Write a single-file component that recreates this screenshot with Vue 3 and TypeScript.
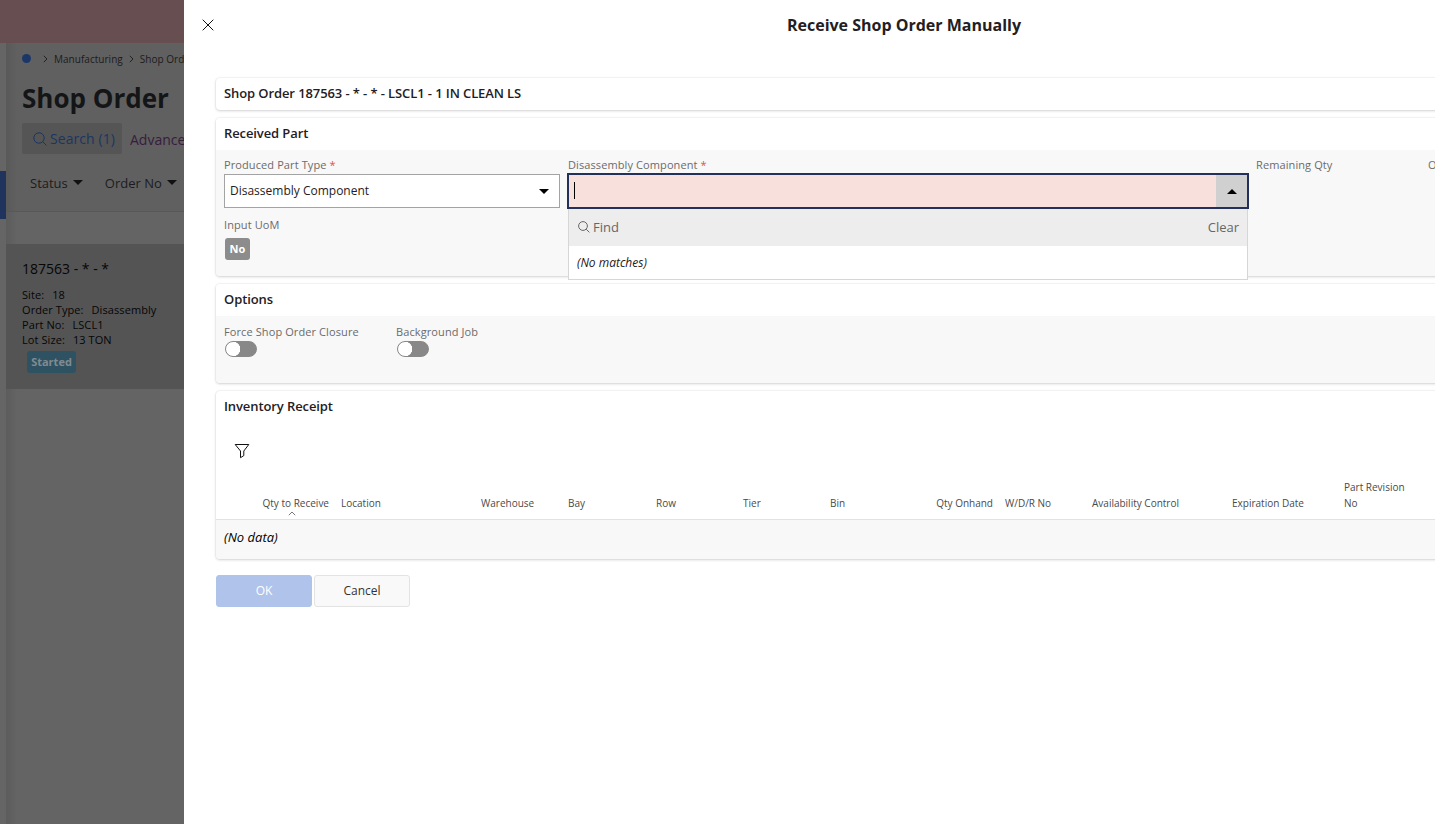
<script setup lang="ts">
interface Column {
  label: string
  width: number
  numeric?: boolean
  sorted?: boolean
}

const columns: Column[] = [
  { label: 'Qty to Receive', width: 119, numeric: true, sorted: true },
  { label: 'Location', width: 140 },
  { label: 'Warehouse', width: 87 },
  { label: 'Bay', width: 88 },
  { label: 'Row', width: 87 },
  { label: 'Tier', width: 87 },
  { label: 'Bin', width: 88 },
  { label: 'Qty Onhand', width: 87, numeric: true },
  { label: 'W/D/R No', width: 87 },
  { label: 'Availability Control', width: 140 },
  { label: 'Expiration Date', width: 112 },
  { label: 'Part Revision No', width: 87 },
]

const details = [
  { name: 'Site', value: '18' },
  { name: 'Order Type', value: 'Disassembly' },
  { name: 'Part No', value: 'LSCL1' },
  { name: 'Lot Size', value: '13 TON' },
]
</script>

<template>
  <div class="app">
    <aside class="page">
      <div class="banner"></div>
      <div class="page-body">
        <div class="rail"><div class="rail-mark"></div></div>
        <div class="content">
          <div class="head">
            <nav class="crumbs">
              <span class="dot"></span>
              <svg class="chev" width="5" height="8" viewBox="0 0 5 8"><path d="M.8 .8 4 4 .8 7.2" /></svg>
              <span class="crumb first">Manufacturing</span>
              <svg class="chev" width="5" height="8" viewBox="0 0 5 8"><path d="M.8 .8 4 4 .8 7.2" /></svg>
              <span class="crumb">Shop Ord</span>
            </nav>
            <h1>Shop Order</h1>
            <div class="tabs">
              <div class="search">
                <svg width="14" height="14" viewBox="0 0 14 14"><circle cx="6" cy="6" r="5.2" /><path d="m9.8 9.8 3.6 3.6" /></svg>
                <span>Search (1)</span>
              </div>
              <span class="advanced">Advance</span>
            </div>
            <div class="filters">
              <span class="status">Status</span><i class="caret"></i>
              <span class="order-no">Order No</span><i class="caret"></i>
            </div>
          </div>
          <div class="strip"></div>
          <div class="record">
            <div class="record-title">187563 - * - *</div>
            <div v-for="d in details" :key="d.name" class="detail">
              <span>{{ d.name }}:</span><span>{{ d.value }}</span>
            </div>
            <span class="started">Started</span>
          </div>
        </div>
      </div>
    </aside>

    <main class="dialog">
      <div class="sheet">
        <header class="bar">
          <svg class="close" width="12" height="12" viewBox="0 0 12 12"><path d="M.7 .7 11.3 11.3M11.3 .7 .7 11.3" /></svg>
          <h2>Receive Shop Order Manually</h2>
        </header>

        <section class="card">
          <h3 class="wide">Shop Order 187563 - * - * - LSCL1 - 1 IN CLEAN LS</h3>
        </section>

        <section class="card received">
          <h3>Received Part</h3>
          <div class="fields">
            <div class="field">
              <label>Produced Part Type <b>*</b></label>
              <div class="select"><span>Disassembly Component</span><i class="caret"></i></div>
            </div>
            <div class="field">
              <label>Disassembly Component <b>*</b></label>
              <div class="combo">
                <div class="entry"><span class="cursor"></span></div>
                <div class="toggle"><i class="caret up"></i></div>
                <div class="menu">
                  <div class="find">
                    <svg width="12" height="12" viewBox="0 0 12 12"><circle cx="5" cy="5" r="4.4" /><path d="m8.2 8.2 3.2 3.2" /></svg>
                    <span>Find</span>
                    <span class="clear">Clear</span>
                  </div>
                  <div class="none">(No matches)</div>
                </div>
              </div>
            </div>
            <div class="field"><label>Remaining Qty</label></div>
            <div class="field"><label>O</label></div>
          </div>
          <label class="uom">Input UoM</label>
          <span class="no">No</span>
        </section>

        <section class="card options">
          <h3>Options</h3>
          <div class="switches">
            <div><label>Force Shop Order Closure</label><span class="switch"></span></div>
            <div><label>Background Job</label><span class="switch"></span></div>
          </div>
        </section>

        <section class="card inventory">
          <h3>Inventory Receipt</h3>
          <svg class="funnel" width="16" height="16" viewBox="0 0 16 16"><path d="M1.2 1.5H14.8L9.8 8V12.6L6.5 14.7V8Z" /></svg>
          <div class="columns">
            <div v-for="c in columns" :key="c.label" class="col" :class="{ numeric: c.numeric }" :style="{ width: c.width + 'px' }">
              <span>{{ c.label }}</span>
              <svg v-if="c.sorted" class="sort" width="8" height="5" viewBox="0 0 8 5"><path d="M.8 4.2 4 1 7.2 4.2" /></svg>
            </div>
          </div>
          <div class="empty">(No data)</div>
        </section>

        <footer class="actions">
          <button class="ok">OK</button>
          <button class="cancel">Cancel</button>
        </footer>
      </div>
    </main>
  </div>
</template>

<style>
body {
  margin: 0;
  overflow: hidden;
}
</style>

<style scoped>
* {
  box-sizing: border-box;
}
.app {
  display: flex;
  width: 1435px;
  height: 824px;
  overflow: hidden;
  background: #fff;
  color: #1f2023;
  font-family: "Open Sans", "Noto Sans", sans-serif;
  font-size: 12px;
}
svg {
  display: block;
  flex: none;
  fill: none;
  stroke: currentColor;
}
h1, h2, h3 {
  margin: 0;
}
.caret {
  flex: none;
  width: 0;
  height: 0;
  border: 5px solid transparent;
  border-top-color: currentColor;
  border-bottom: 0;
}
.caret.up {
  border-top: 0;
  border-bottom: 5px solid #000;
}

.page {
  flex: none;
  display: flex;
  flex-direction: column;
  width: 184px;
  overflow: hidden;
  background: #646464;
  color: #0b0b0b;
  white-space: nowrap;
}
.banner {
  flex: none;
  height: 43px;
  background: #664e51;
}
.page-body {
  flex: 1;
  display: flex;
}
.rail {
  flex: none;
  width: 6px;
  padding-top: 128px;
  background: #656565;
}
.rail-mark {
  height: 48px;
  background: #20335c;
}
.content {
  flex: 1;
  min-width: 0;
  background: linear-gradient(90deg, #5c5c5c, #646464 11px);
}
.head {
  height: 169px;
  padding-left: 16px;
  border-bottom: 1px solid #585858;
  background: linear-gradient(90deg, #595959, #606060 11px);
}
.crumbs {
  display: flex;
  align-items: center;
  height: 31px;
  font-size: 10px;
  letter-spacing: .03px;
}
.crumb {
  flex: none;
  color: #1c1c1c;
}
.dot {
  flex: none;
  width: 9px;
  height: 9px;
  margin-right: 12px;
  border-radius: 50%;
  background: #1b3768;
}
.chev {
  margin-right: 6px;
  stroke: #222;
}
.crumb.first {
  margin-right: 6px;
}
h1 {
  height: 48px;
  line-height: 48px;
  font-size: 26px;
  font-weight: 700;
  color: #141517;
}
.tabs {
  display: flex;
  align-items: center;
  height: 33px;
  font-size: 14px;
}
.search {
  flex: none;
  display: flex;
  align-items: center;
  width: 100px;
  height: 31px;
  padding-left: 11px;
  border-radius: 2px;
  background: #555;
  color: #1b3563;
}
.search svg {
  margin-right: 3px;
}
.search span {
  letter-spacing: .07px;
}
.advanced {
  margin-left: 8px;
  padding-top: 1px;
  color: #371c3c;
}
.filters {
  display: flex;
  align-items: center;
  height: 56px;
  padding-left: 8px;
  font-size: 13px;
  color: #1c1c1c;
}
.filters .caret {
  margin-left: 5px;
  margin-top: -2px;
  color: #111;
}
.order-no {
  margin-left: 22px;
}
.strip {
  height: 32px;
}
.record {
  height: 145px;
  padding: 14px 0 0 16px;
  background: #545454;
  color: #060606;
}
.record-title {
  height: 29px;
  line-height: 22px;
  font-size: 14px;
}
.detail {
  display: flex;
  gap: 8px;
  height: 15px;
  line-height: 15px;
  font-size: 11px;
  letter-spacing: .08px;
}
.started {
  display: inline-block;
  width: 49px;
  height: 22px;
  margin: 4px 0 0 5px;
  border-radius: 3px;
  background: #2f5263;
  color: #808b91;
  font-size: 11px;
  font-weight: 700;
  line-height: 22px;
  text-align: center;
}

.dialog {
  flex: 1;
  min-width: 0;
  overflow: hidden;
}
.sheet {
  width: 1440px;
  padding: 0 32px;
}
.bar {
  display: flex;
  align-items: center;
  height: 50px;
  margin: 0 -32px 28px;
  padding-left: 18px;
}
.close {
  stroke: #111;
}
h2 {
  flex: 1;
  margin-right: 30px;
  font-size: 16px;
  font-weight: 700;
  line-height: 22px;
  text-align: center;
}
.card {
  margin-bottom: 8px;
  border-radius: 4px;
  background: #fff;
  box-shadow: 0 0 2px rgba(0, 0, 0, .12), 0 1px 3px rgba(0, 0, 0, .15);
}
h3 {
  height: 32px;
  padding-left: 8px;
  font-size: 13px;
  font-weight: 600;
  line-height: 31px;
  letter-spacing: -.1px;
}
.received {
  height: 158px;
  background: linear-gradient(#fff 32px, #f8f8f8 32px);
}
.fields {
  display: grid;
  grid-template-columns: 336px 680px 164px 164px;
  gap: 8px;
  padding: 8px 8px 0;
}
label {
  display: block;
  height: 16px;
  font-size: 11px;
  line-height: 13px;
  letter-spacing: .1px;
  color: #6b6b6b;
}
label b {
  color: #e0533f;
  font-weight: 400;
}
.select {
  display: flex;
  align-items: center;
  justify-content: space-between;
  height: 34px;
  padding: 0 10px 2px 5px;
  border: 1px solid #a3a3a3;
  background: #fff;
}
.select .caret {
  margin-top: 2px;
  color: #000;
}
.combo {
  position: relative;
  display: flex;
  height: 36px;
  margin: -1px -1px 0;
  border: 2px solid #22305a;
}
.entry {
  flex: 1;
  padding: 7px 0 0 5px;
  background: #f8e1dd;
}
.cursor {
  display: block;
  width: 1px;
  height: 17px;
  background: #000;
}
.toggle {
  display: flex;
  align-items: center;
  justify-content: center;
  width: 31px;
  background: #d0d0d0;
}
.menu {
  position: absolute;
  z-index: 2;
  top: 34px;
  left: -1px;
  right: -1px;
  border: 1px solid #d6d6d6;
  border-top: 0;
  background: #fff;
}
.find {
  display: flex;
  align-items: center;
  height: 37px;
  padding: 0 8px 2px 9px;
  background: #ededed;
  color: #666;
  font-size: 13px;
}
.find svg {
  margin-right: 3px;
}
.clear {
  margin-left: auto;
}
.none {
  height: 33px;
  padding-left: 8px;
  font-size: 12px;
  font-style: italic;
  line-height: 33px;
}
.uom {
  margin: 9px 0 0 8px;
  height: 20px;
}
.no {
  display: block;
  width: 25px;
  height: 22px;
  margin-left: 9px;
  border-radius: 3px;
  background: #8c8c8c;
  color: #fff;
  font-size: 11px;
  font-weight: 700;
  line-height: 22px;
  text-align: center;
}
.options {
  height: 99px;
  background: linear-gradient(#fff 32px, #f8f8f8 32px);
}
.switches {
  display: grid;
  grid-template-columns: 164px 164px;
  gap: 8px;
  padding: 9px 8px 0;
}
.switch {
  display: block;
  width: 32px;
  height: 16px;
  margin-left: 1px;
  border: 1px solid #888;
  border-radius: 8px;
  background: radial-gradient(circle at 7px 7px, #fff 7px, #888 7.5px);
}
.inventory {
  height: 168px;
}
.funnel {
  margin: 20px 0 0 18px;
  stroke: #111;
}
.columns {
  display: flex;
  align-items: flex-end;
  height: 61px;
  padding-bottom: 8px;
  border-bottom: 1px solid #e2e2e2;
  color: #4a4a4a;
  font-size: 10px;
  line-height: 16px;
}
.col {
  flex: none;
  position: relative;
  padding: 0 6px;
}
.numeric {
  text-align: right;
}
.sort {
  position: absolute;
  right: 39px;
  bottom: -5px;
  stroke: #777;
}
.empty {
  height: 39px;
  padding-left: 8px;
  border-radius: 0 0 4px 4px;
  background: #f8f8f8;
  font-size: 13px;
  font-style: italic;
  line-height: 35px;
  color: #000;
}
.actions {
  display: flex;
  gap: 2px;
  padding-top: 8px;
}
button {
  width: 96px;
  height: 32px;
  padding: 0 0 1px;
  border: 1px solid #e3e3e3;
  border-radius: 3px;
  background: #f9f9f9;
  color: #333;
  font: 12px "Open Sans", "Noto Sans", sans-serif;
}
.ok {
  border-color: #b0c3ea;
  background: #b0c3ea;
  color: #fff;
}
</style>
